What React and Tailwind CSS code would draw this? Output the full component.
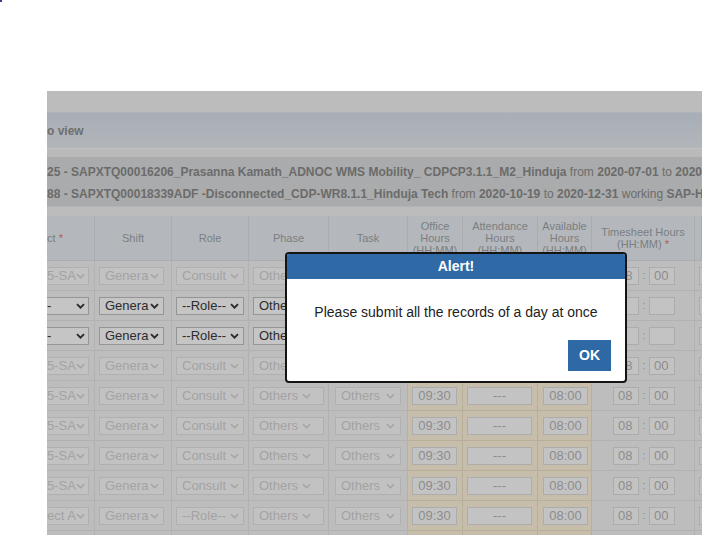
import React from 'react';

const COLS = 'grid grid-cols-[48px_77px_77px_80px_79px_55px_75px_54px_103px_1fr]';

const rows = [
  { proj: '5-SAP', on: false, role: 'Consult', ts: ['08', '00'] },
  { proj: '-', on: true, role: '--Role--', ts: ['', ''] },
  { proj: '-', on: true, role: '--Role--', ts: ['', ''] },
  { proj: '5-SAP', on: false, role: 'Consult', ts: ['08', '00'] },
  { proj: '5-SAP', on: false, role: 'Consult', ts: ['08', '00'] },
  { proj: '5-SAP', on: false, role: 'Consult', ts: ['08', '00'] },
  { proj: '5-SAP', on: false, role: 'Consult', ts: ['08', '00'] },
  { proj: '5-SAP', on: false, role: 'Consult', ts: ['08', '00'] },
  { proj: 'ect A', on: false, role: '--Role--', ts: ['08', '00'] },
  { proj: '5-SAP', on: false, role: 'Consult', ts: ['08', '00'] },
];

function Chevron({ on, className }) {
  return (
    <svg width="9" height="6" viewBox="0 0 9 6" className={`shrink-0 ${className}`}>
      <path
        d="M1 1.2l3.5 3.5L8 1.2"
        fill="none"
        stroke={on ? '#2c2c2c' : '#a4a4a4'}
        strokeWidth={on ? 1.9 : 1.6}
      />
    </svg>
  );
}

function Sel({ text, on, className = '', pad = 'pl-[5px]', chev = 'mr-[4px]' }) {
  return (
    <div
      className={`flex h-[18px] items-center border text-[13px] ${
        on ? 'border-[#959595] bg-[#c5c5c5] text-[#2c2c2c]' : 'border-[#b0b0b0] bg-[#c2c2c2] text-[#a3a3a3]'
      } ${className}`}
    >
      <span className={`min-w-0 flex-1 overflow-hidden whitespace-nowrap leading-none ${pad}`}>{text}</span>
      <Chevron on={on} className={chev} />
    </div>
  );
}

function Box({ text, className = '', align = 'justify-center' }) {
  return (
    <div
      className={`flex h-[18px] items-center border border-[#acacac] bg-[#c3c3c3] text-[13px] leading-none text-[#8d8d8d] ${align} ${className}`}
    >
      {text}
    </div>
  );
}

function HeadCell({ children, className = '' }) {
  return (
    <div
      className={`flex items-center justify-center border-r border-[#a9adb1] text-center text-[11px] leading-[12px] text-[#7b7e81] ${className}`}
    >
      <div>{children}</div>
    </div>
  );
}

function Row({ r }) {
  const cell = 'flex items-center border-r border-b border-[#b1b1b1]';
  const tan = 'flex items-center border-r border-b border-[#b8ae9c] bg-[#c6bdab]';
  return (
    <div className={`${COLS} h-[30px]`}>
      <div className={cell}>
        <Sel text={r.proj} on={r.on} className="w-[42px] border-l-0" pad="pl-0" chev="mr-[3px]" />
      </div>
      <div className={`${cell} pl-[4px]`}>
        <Sel text="Genera" on={r.on} className="w-[65px]" />
      </div>
      <div className={`${cell} pl-[4px]`}>
        <Sel text={r.role} on={r.on} className="w-[68px]" />
      </div>
      <div className={`${cell} pl-[4px]`}>
        <Sel text="Others" on={r.on} className="w-[71px]" chev="mr-[12px]" />
      </div>
      <div className={`${cell} pl-[6px]`}>
        <Sel text="Others" on={r.on} className="w-[66px]" chev="mr-[5px]" />
      </div>
      <div className={`${tan} pl-[4px]`}>
        <Box text={r.on ? '' : '09:30'} className="w-[45px]" />
      </div>
      <div className={`${tan} pl-[4px]`}>
        <Box text="---" className="w-[65px]" />
      </div>
      <div className={`${tan} pl-[5px]`}>
        <Box text={r.on ? '' : '08:00'} className="w-[45px]" />
      </div>
      <div className={`${cell} pl-[21px]`}>
        <Box text={r.ts[0]} className="w-[26px] pl-[4px]" align="justify-start" />
        <span className="w-[10px] text-center text-[11px] text-[#8d8d8d]">:</span>
        <Box text={r.ts[1]} className="w-[26px] pl-[4px]" align="justify-start" />
      </div>
      <div className={`${cell} pl-[4px]`}>
        <Box text="" className="w-[40px] shrink-0" />
      </div>
    </div>
  );
}

export default function App() {
  return (
    <div className="relative h-[535px] w-[702px] overflow-hidden bg-white font-['Liberation_Sans',Arial,sans-serif]">
      <div className="h-[2px] w-[2px] bg-[#3a3a8c]" />

      <div className="relative ml-[47px] mt-[89px] h-[444px] overflow-hidden bg-[#bdbdbd]">
        <div className="h-[22px] border-b border-[#b0b4b8] bg-[#bcbcbc]" />
        <div className="flex h-[35px] items-center bg-gradient-to-b from-[#a8aeb6] to-[#b2b6bb] text-[12px] font-bold text-[#6e6e6e]">
          o view
        </div>
        <div className="h-[9px] border-t border-[#c2c2c2] bg-[#bababa]" />
        <div className="h-[49px] overflow-hidden whitespace-nowrap bg-[#aaabac] pt-[4px] text-[12px] leading-[22px] text-[#6b6b6b]">
          <div>
            <b>25 - SAPXTQ00016206_Prasanna Kamath_ADNOC WMS Mobility_ CDPCP3.1.1_M2_Hinduja</b> from{' '}
            <b>2020-07-01</b> to <b>2020-12-31</b>
          </div>
          <div>
            <b>88 - SAPXTQ00018339ADF -Disconnected_CDP-WR8.1.1_Hinduja Tech</b> from <b>2020-10-19</b> to{' '}
            <b>2020-12-31</b> working <b>SAP-HANA</b>
          </div>
        </div>
        <div className="h-[10px] border-t border-[#b3b3b3] bg-[#bcbcbc]" />

        <div className={`${COLS} h-[45px] border-b border-[#a9adb1] bg-[#b4b8bc]`}>
          <HeadCell className="justify-start">
            ct <span className="text-[#b25a5a]">*</span>
          </HeadCell>
          <HeadCell>Shift</HeadCell>
          <HeadCell>Role</HeadCell>
          <HeadCell>Phase</HeadCell>
          <HeadCell>Task</HeadCell>
          <HeadCell>
            Office
            <br />
            Hours
            <br />
            (HH:MM)
          </HeadCell>
          <HeadCell>
            Attendance
            <br />
            Hours
            <br />
            (HH:MM)
          </HeadCell>
          <HeadCell>
            Available
            <br />
            Hours
            <br />
            (HH:MM)
          </HeadCell>
          <HeadCell>
            Timesheet Hours
            <br />
            (HH:MM) <span className="text-[#b25a5a]">*</span>
          </HeadCell>
          <HeadCell />
        </div>

        {rows.map((r, i) => (
          <Row key={i} r={r} />
        ))}

        <div className="absolute left-[238px] top-[161px] w-[342px] overflow-hidden rounded-[4px] border-2 border-[#141414] bg-white">
          <div className="flex h-[25px] items-center justify-center bg-[#2f69a6] text-[14px] font-bold text-white">
            Alert!
          </div>
          <div className="pt-[23px] text-center text-[14px] leading-[20px] text-[#222]">
            Please submit all the records of a day at once
          </div>
          <div className="flex justify-end pb-[10px] pr-[14px] pt-[18px]">
            <button className="h-[31px] w-[43px] bg-[#2e69a6] text-[14px] font-bold text-white">OK</button>
          </div>
        </div>
      </div>
    </div>
  );
}
